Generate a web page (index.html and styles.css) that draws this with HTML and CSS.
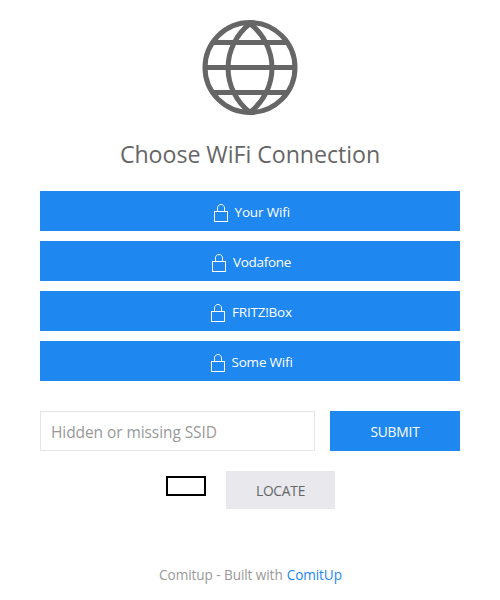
FILE: index.html
```
<!DOCTYPE html>
<html lang="en">
<head>
<meta charset="utf-8">
<title>Comitup</title>
<link rel="stylesheet" href="styles.css">
</head>
<body>
<svg width="0" height="0" class="defs"><symbol id="lock" viewBox="0 0 20 20"><rect fill="none" stroke="currentColor" x="3.5" y="8.5" width="13" height="10"/><path fill="none" stroke="currentColor" d="M6.5,8 L6.5,4.88 C6.5,3.01 8.07,1.5 10,1.5 C11.93,1.5 13.5,3.01 13.5,4.88 L13.5,8"/></symbol></svg>
<main class="page">
<svg class="globe" viewBox="0 0 20 20" fill="none" stroke="currentColor"><path d="M1,10.5 L19,10.5"/><path d="M2.35,15.5 L17.65,15.5"/><path d="M2.35,5.5 L17.523,5.5"/><path d="M10,19.46 L9.98,19.47 C7.31,17.33 5.61,14.141 5.61,10.58 C5.61,7.02 7.33,3.83 10,1.7 C12.67,3.84 14.4,7.02 14.4,10.58 C14.4,14.141 12.67,17.33 10,19.47 Z"/><circle cx="10" cy="10.5" r="9"/></svg>
<h1 class="title">Choose WiFi Connection</h1>
<div class="networks">
<a class="network"><svg class="lock"><use href="#lock"/></svg><span class="name your">Your Wifi</span></a>
<a class="network"><svg class="lock"><use href="#lock"/></svg><span class="name vodafone">Vodafone</span></a>
<a class="network"><svg class="lock"><use href="#lock"/></svg><span class="name fritz">FRITZ!Box</span></a>
<a class="network"><svg class="lock"><use href="#lock"/></svg><span class="name some">Some Wifi</span></a>
</div>
<div class="form"><div class="field"><span>Hidden or missing SSID</span></div><div class="submit"><span>SUBMIT</span></div></div>
<div class="actions"><div class="box"></div><div class="locate"><span>LOCATE</span></div></div>
<footer class="footer"><span class="built">Comitup - Built with</span><a class="link">ComitUp</a></footer>
</main>
</body>
</html>
```
FILE: styles.css
```
body { margin: 0; background: #fff; color: #666; font-family: "Open Sans", "Noto Sans", sans-serif; font-weight: 400; }
.defs { position: absolute; }
.page { display: flex; flex-direction: column; padding: 15px 40px 0; }
.globe { width: 100px; height: 100px; align-self: center; color: #666; }
.title { margin: 19px 0 0; height: 40px; line-height: 40px; font-size: 23.2px; font-weight: 400; text-align: center; letter-spacing: -0.05px; white-space: nowrap; }
.networks { display: flex; flex-direction: column; gap: 10px; margin-top: 17px; }
.network { display: flex; justify-content: center; align-items: center; gap: 4px; height: 40px; background: #1e87f0; color: #fff; font-size: 13.5px; line-height: 40px; }
.lock { width: 20px; height: 20px; margin-top: 4px; }
.name { white-space: nowrap; margin-top: 1px; }
.your { width: 55px; letter-spacing: -0.15px; }
.vodafone { width: 58px; letter-spacing: -0.3px; }
.fritz { width: 60px; letter-spacing: -0.2px; }
.some { width: 61px; letter-spacing: -0.2px; }
.form { display: flex; gap: 15px; margin-top: 30px; }
.field { box-sizing: border-box; width: 275px; height: 40px; padding: 1px 0 0 10px; border: 1px solid #e5e5e5; color: #999; font-size: 15.5px; line-height: 38px; letter-spacing: -0.08px; }
.submit { width: 130px; height: 40px; background: #1e87f0; color: #fff; font-size: 13.8px; line-height: 42px; text-align: center; letter-spacing: -0.2px; }
.actions { display: flex; justify-content: center; gap: 20px; margin: 20px 0 0 1px; }
.box { box-sizing: border-box; width: 40px; height: 20px; margin-top: 5px; border: 2px solid #000; }
.locate { width: 109px; height: 38px; background: #e8e8ed; color: #666; font-size: 13.8px; line-height: 40px; text-align: center; letter-spacing: -0.25px; }
.footer { display: flex; justify-content: center; gap: 4px; margin: 56px 0 0 1px; color: #999; font-size: 13.6px; line-height: 20px; letter-spacing: -0.08px; }
.link { color: #1e87f0; }
```
